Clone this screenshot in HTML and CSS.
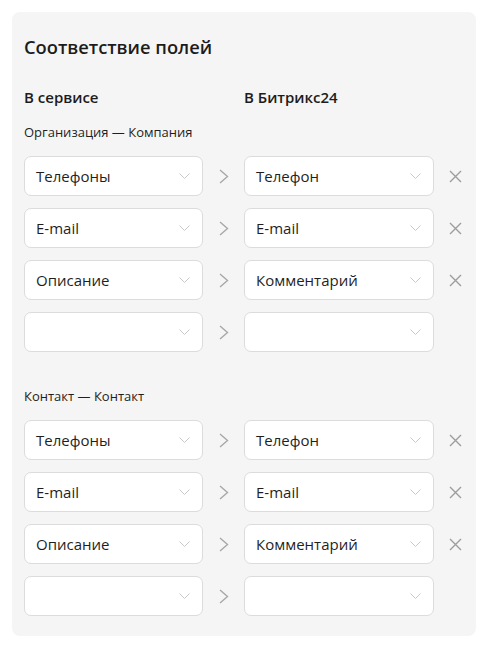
FILE: index.html
```html
<!DOCTYPE html>
<html lang="ru">
<head>
<meta charset="utf-8">
<link rel="stylesheet" href="styles.css">
</head>
<body>
<div class="card">
  <h1 class="title">Соответствие полей</h1>
  <div class="heads">
    <div class="head">В сервисе</div>
    <div></div>
    <div class="head">В Битрикс24</div>
  </div>

  <div class="section">
    <div class="label">Организация — Компания</div>
    <div class="rows">
      <div class="row">
        <div class="sel"><span>Телефоны</span><svg class="chev" width="11" height="6" viewBox="0 0 11 6"><path d="M0.5 0.5 L5.5 5.5 L10.5 0.5" fill="none" stroke="#c9c9c9" stroke-width="1"/></svg></div>
        <svg class="arrow" width="10" height="15" viewBox="0 0 10 15"><path d="M1 1 L8.5 7.5 L1 14" fill="none" stroke="#a8a8a8" stroke-width="1.4"/></svg>
        <div class="sel"><span>Телефон</span><svg class="chev" width="11" height="6" viewBox="0 0 11 6"><path d="M0.5 0.5 L5.5 5.5 L10.5 0.5" fill="none" stroke="#c9c9c9" stroke-width="1"/></svg></div>
        <svg class="cross" width="13" height="13" viewBox="0 0 13 13"><path d="M1 1 L12 12 M12 1 L1 12" fill="none" stroke="#9d9d9d" stroke-width="1.4"/></svg>
      </div>
      <div class="row">
        <div class="sel"><span>E-mail</span><svg class="chev" width="11" height="6" viewBox="0 0 11 6"><path d="M0.5 0.5 L5.5 5.5 L10.5 0.5" fill="none" stroke="#c9c9c9" stroke-width="1"/></svg></div>
        <svg class="arrow" width="10" height="15" viewBox="0 0 10 15"><path d="M1 1 L8.5 7.5 L1 14" fill="none" stroke="#a8a8a8" stroke-width="1.4"/></svg>
        <div class="sel"><span>E-mail</span><svg class="chev" width="11" height="6" viewBox="0 0 11 6"><path d="M0.5 0.5 L5.5 5.5 L10.5 0.5" fill="none" stroke="#c9c9c9" stroke-width="1"/></svg></div>
        <svg class="cross" width="13" height="13" viewBox="0 0 13 13"><path d="M1 1 L12 12 M12 1 L1 12" fill="none" stroke="#9d9d9d" stroke-width="1.4"/></svg>
      </div>
      <div class="row">
        <div class="sel"><span>Описание</span><svg class="chev" width="11" height="6" viewBox="0 0 11 6"><path d="M0.5 0.5 L5.5 5.5 L10.5 0.5" fill="none" stroke="#c9c9c9" stroke-width="1"/></svg></div>
        <svg class="arrow" width="10" height="15" viewBox="0 0 10 15"><path d="M1 1 L8.5 7.5 L1 14" fill="none" stroke="#a8a8a8" stroke-width="1.4"/></svg>
        <div class="sel"><span>Комментарий</span><svg class="chev" width="11" height="6" viewBox="0 0 11 6"><path d="M0.5 0.5 L5.5 5.5 L10.5 0.5" fill="none" stroke="#c9c9c9" stroke-width="1"/></svg></div>
        <svg class="cross" width="13" height="13" viewBox="0 0 13 13"><path d="M1 1 L12 12 M12 1 L1 12" fill="none" stroke="#9d9d9d" stroke-width="1.4"/></svg>
      </div>
      <div class="row">
        <div class="sel"><span></span><svg class="chev" width="11" height="6" viewBox="0 0 11 6"><path d="M0.5 0.5 L5.5 5.5 L10.5 0.5" fill="none" stroke="#c9c9c9" stroke-width="1"/></svg></div>
        <svg class="arrow" width="10" height="15" viewBox="0 0 10 15"><path d="M1 1 L8.5 7.5 L1 14" fill="none" stroke="#a8a8a8" stroke-width="1.4"/></svg>
        <div class="sel"><span></span><svg class="chev" width="11" height="6" viewBox="0 0 11 6"><path d="M0.5 0.5 L5.5 5.5 L10.5 0.5" fill="none" stroke="#c9c9c9" stroke-width="1"/></svg></div>
        <div></div>
      </div>
    </div>
  </div>

  <div class="section second">
    <div class="label">Контакт — Контакт</div>
    <div class="rows">
      <div class="row">
        <div class="sel"><span>Телефоны</span><svg class="chev" width="11" height="6" viewBox="0 0 11 6"><path d="M0.5 0.5 L5.5 5.5 L10.5 0.5" fill="none" stroke="#c9c9c9" stroke-width="1"/></svg></div>
        <svg class="arrow" width="10" height="15" viewBox="0 0 10 15"><path d="M1 1 L8.5 7.5 L1 14" fill="none" stroke="#a8a8a8" stroke-width="1.4"/></svg>
        <div class="sel"><span>Телефон</span><svg class="chev" width="11" height="6" viewBox="0 0 11 6"><path d="M0.5 0.5 L5.5 5.5 L10.5 0.5" fill="none" stroke="#c9c9c9" stroke-width="1"/></svg></div>
        <svg class="cross" width="13" height="13" viewBox="0 0 13 13"><path d="M1 1 L12 12 M12 1 L1 12" fill="none" stroke="#9d9d9d" stroke-width="1.4"/></svg>
      </div>
      <div class="row">
        <div class="sel"><span>E-mail</span><svg class="chev" width="11" height="6" viewBox="0 0 11 6"><path d="M0.5 0.5 L5.5 5.5 L10.5 0.5" fill="none" stroke="#c9c9c9" stroke-width="1"/></svg></div>
        <svg class="arrow" width="10" height="15" viewBox="0 0 10 15"><path d="M1 1 L8.5 7.5 L1 14" fill="none" stroke="#a8a8a8" stroke-width="1.4"/></svg>
        <div class="sel"><span>E-mail</span><svg class="chev" width="11" height="6" viewBox="0 0 11 6"><path d="M0.5 0.5 L5.5 5.5 L10.5 0.5" fill="none" stroke="#c9c9c9" stroke-width="1"/></svg></div>
        <svg class="cross" width="13" height="13" viewBox="0 0 13 13"><path d="M1 1 L12 12 M12 1 L1 12" fill="none" stroke="#9d9d9d" stroke-width="1.4"/></svg>
      </div>
      <div class="row">
        <div class="sel"><span>Описание</span><svg class="chev" width="11" height="6" viewBox="0 0 11 6"><path d="M0.5 0.5 L5.5 5.5 L10.5 0.5" fill="none" stroke="#c9c9c9" stroke-width="1"/></svg></div>
        <svg class="arrow" width="10" height="15" viewBox="0 0 10 15"><path d="M1 1 L8.5 7.5 L1 14" fill="none" stroke="#a8a8a8" stroke-width="1.4"/></svg>
        <div class="sel"><span>Комментарий</span><svg class="chev" width="11" height="6" viewBox="0 0 11 6"><path d="M0.5 0.5 L5.5 5.5 L10.5 0.5" fill="none" stroke="#c9c9c9" stroke-width="1"/></svg></div>
        <svg class="cross" width="13" height="13" viewBox="0 0 13 13"><path d="M1 1 L12 12 M12 1 L1 12" fill="none" stroke="#9d9d9d" stroke-width="1.4"/></svg>
      </div>
      <div class="row">
        <div class="sel"><span></span><svg class="chev" width="11" height="6" viewBox="0 0 11 6"><path d="M0.5 0.5 L5.5 5.5 L10.5 0.5" fill="none" stroke="#c9c9c9" stroke-width="1"/></svg></div>
        <svg class="arrow" width="10" height="15" viewBox="0 0 10 15"><path d="M1 1 L8.5 7.5 L1 14" fill="none" stroke="#a8a8a8" stroke-width="1.4"/></svg>
        <div class="sel"><span></span><svg class="chev" width="11" height="6" viewBox="0 0 11 6"><path d="M0.5 0.5 L5.5 5.5 L10.5 0.5" fill="none" stroke="#c9c9c9" stroke-width="1"/></svg></div>
        <div></div>
      </div>
    </div>
  </div>
</div>
</body>
</html>
```

FILE: styles.css
```css
html, body {
  margin: 0;
  padding: 0;
  background: #ffffff;
}
body {
  padding: 12px 7px 12px 12px;
  font-family: "Open Sans", "Noto Sans", sans-serif;
  color: #1f1f1f;
}
.card {
  background: #f5f5f5;
  border-radius: 8px;
  padding: 24px 12px 20px 12px;
  width: 440px;
}
.title {
  margin: 0;
  font-size: 18.3px;
  line-height: 22px;
  font-weight: 600;
  color: #1c1c1c;
}
.heads {
  display: grid;
  grid-template-columns: 179px 41px 190px;
  margin-top: 29px;
}
.head {
  font-size: 15px;
  line-height: 20px;
  font-weight: 600;
  color: #1c1c1c;
}
.section {
  margin-top: 16px;
}
.section.second {
  margin-top: 35px;
}
.label {
  font-size: 13px;
  line-height: 18px;
  color: #1f1f1f;
}
.rows {
  margin-top: 15px;
  display: flex;
  flex-direction: column;
  gap: 12px;
}
.row {
  display: grid;
  grid-template-columns: 179px 41px 190px 42px;
  align-items: center;
}
.sel {
  box-sizing: border-box;
  height: 40px;
  background: #ffffff;
  border: 1px solid #dcdcdc;
  border-radius: 7px;
  display: flex;
  align-items: center;
  justify-content: space-between;
  padding: 0 12px 0 11px;
  font-size: 15px;
  color: #1f1f1f;
}
.chev {
  display: block;
}
.arrow {
  justify-self: center;
  display: block;
}
.cross {
  justify-self: center;
  display: block;
}
```
